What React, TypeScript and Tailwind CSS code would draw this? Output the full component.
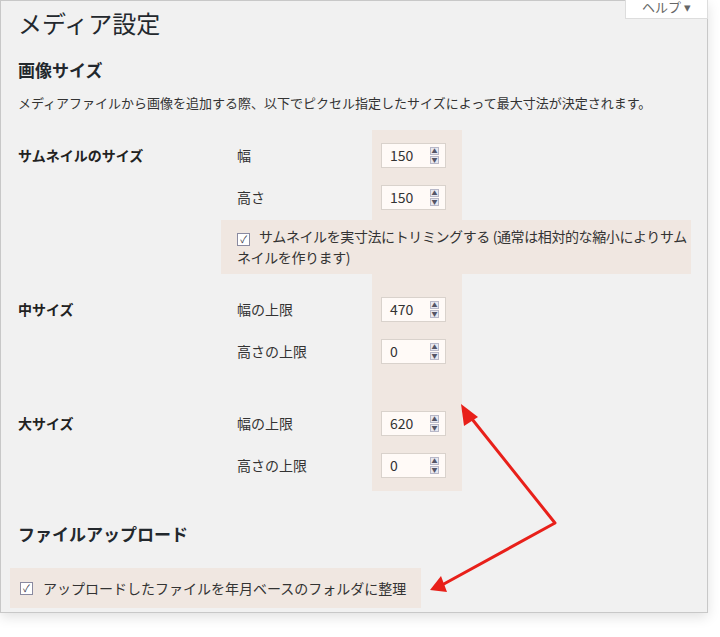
const font = { fontFamily: '"Noto Sans CJK JP", "Noto Sans", sans-serif' };

function NumInput({ value }: { value: string }) {
    return (
        <div className="flex h-[25px] w-[65px] items-center justify-between border border-[#d9d2cc] bg-[#fffaf7] pl-[8px] pr-[6px] text-[14px] text-[#333]">
            <span>{value}</span>
            <div className="flex flex-col gap-px">
                <div className="flex h-[8px] w-[9px] items-center justify-center border border-[#b8b8c8] bg-[#e8e8f0] text-[6px] leading-none text-[#556]">▲</div>
                <div className="flex h-[8px] w-[9px] items-center justify-center border border-[#b8b8c8] bg-[#e8e8f0] text-[6px] leading-none text-[#556]">▼</div>
            </div>
        </div>
    );
}

function Check({ className = '' }: { className?: string }) {
    return (
        <span className={`inline-flex h-[13px] w-[13px] shrink-0 items-center justify-center border border-[#8a8aa0] bg-white text-[10px] leading-none text-[#334] ${className}`}>✓</span>
    );
}

function Field({ group, label, value }: { group?: string; label: string; value: string }) {
    return (
        <div className="flex h-[42px] items-center">
            <div className="w-[219px] text-[14px] font-bold text-[#222]">{group}</div>
            <div className="w-[144px] text-[14px] text-[#333]">{label}</div>
            <NumInput value={value} />
        </div>
    );
}

export default function App() {
    return (
        <div className="relative h-[637px] w-[720px] overflow-hidden bg-white" style={font}>
            <div className="relative h-[613px] w-[708px] border border-[#c8c8c8] bg-[#f1f1f1] shadow-[0_4px_12px_rgba(0,0,0,0.12)]">
                {/* highlight column */}
                <div className="absolute left-[371px] top-[129px] h-[361px] w-[90px] bg-[#f0e7e1]" />

                <div className="absolute right-[-1px] top-[-4px] flex h-[22px] w-[83px] items-end justify-center border border-[#ddd] bg-white pb-[3px] text-[13px] leading-[16px] text-[#666]">
                    ヘルプ ▾
                </div>

                <div className="relative flex flex-col px-[17px]">
                    <h1 className="mt-[6px] text-[24px] leading-[32px] text-[#23282d]">メディア設定</h1>
                    <h2 className="mt-[19px] text-[17px] font-bold leading-[24px] text-[#23282d]">画像サイズ</h2>
                    <p className="mt-[10px] text-[13px] leading-[22px] text-[#333]">メディアファイルから画像を追加する際、以下でピクセル指定したサイズによって最大寸法が決定されます。</p>

                    <div className="mt-[20px]">
                        <Field group="サムネイルのサイズ" label="幅" value="150" />
                        <Field label="高さ" value="150" />
                        <div className="ml-[203px] mt-[2px] w-[470px] bg-[#f0e7e1] py-[6px] pl-[16px] pr-[2px] text-[14px] leading-[21px] tracking-[-0.4px] text-[#333]">
                            <Check className="mr-[9px] align-[-1px]" />サムネイルを実寸法にトリミングする (通常は相対的な縮小によりサムネイルを作ります)
                        </div>
                        <div className="mt-[14px]">
                            <Field group="中サイズ" label="幅の上限" value="470" />
                            <Field label="高さの上限" value="0" />
                        </div>
                        <div className="mt-[30px]">
                            <Field group="大サイズ" label="幅の上限" value="620" />
                            <Field label="高さの上限" value="0" />
                        </div>
                    </div>

                    <h2 className="mt-[36px] text-[17px] font-bold leading-[24px] text-[#23282d]">ファイルアップロード</h2>
                    <div className="-ml-[8px] mt-[22px] flex h-[40px] w-[411px] items-center gap-[10px] bg-[#f0e7e1] px-[10px] text-[14px] text-[#333]">
                        <Check />アップロードしたファイルを年月ベースのフォルダに整理
                    </div>
                </div>
            </div>

            <svg className="absolute left-0 top-0" width="720" height="637" viewBox="0 0 720 637">
                <polyline points="468,414 555,523 442,585" fill="none" stroke="#e8201a" strokeWidth="3" strokeLinejoin="round" />
                <polygon points="461,404 478,417 464,426" fill="#e8201a" />
                <polygon points="430,590 441,576 447,592" fill="#e8201a" />
            </svg>
        </div>
    );
}
